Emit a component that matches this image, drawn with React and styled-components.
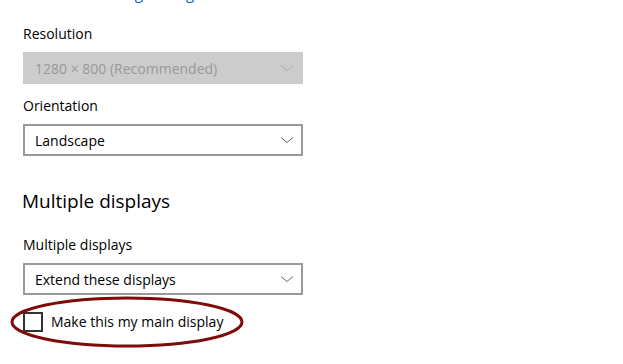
import React from "react";
import styled, { createGlobalStyle } from "styled-components";

const Global = createGlobalStyle`
  html, body { margin: 0; padding: 0; background: #fff; }
  body { font-family: "Open Sans", "Noto Sans", sans-serif; color: #000; }
`;

const Page = styled.div`
  width: 623px;
  height: 364px;
  overflow: hidden;
  padding-left: 23px;
  box-sizing: border-box;
  display: flex;
  flex-direction: column;
  align-items: flex-start;
`;

const LinkStub = styled.a`
  display: block;
  margin-top: -15px;
  height: 16px;
  line-height: 16px;
  font-size: 15px;
  color: #0067c0;
  text-decoration: none;
`;

const Label = styled.div`
  margin-top: ${(p) => p.$mt}px;
  font-size: 14px;
  line-height: 20px;
  color: #000;
`;

const Heading = styled.h2`
  margin: ${(p) => p.$mt}px 0 0 -1px;
  font-size: 19px;
  line-height: 28px;
  font-weight: 400;
  color: #000;
`;

const Select = styled.div`
  margin-top: 8px;
  width: 280px;
  height: 32px;
  box-sizing: border-box;
  display: flex;
  align-items: center;
  justify-content: space-between;
  padding: 0 7px 0 10px;
  font-size: 14px;
  background: ${(p) => (p.$disabled ? "#cccccc" : "#ffffff")};
  border: 2px solid ${(p) => (p.$disabled ? "#cccccc" : "#999999")};
  color: ${(p) => (p.$disabled ? "#999999" : "#000000")};
`;

const Chevron = ({ color }) => (
  <svg width="14" height="8" viewBox="0 0 14 8">
    <polyline points="1,1.5 7,6.5 13,1.5" fill="none" stroke={color} strokeWidth="1" />
  </svg>
);

const CheckRow = styled.label`
  position: relative;
  margin-top: 17px;
  display: flex;
  align-items: center;
  gap: 8px;
  font-size: 14px;
  line-height: 20px;
`;

const Box = styled.span`
  width: 20px;
  height: 20px;
  box-sizing: border-box;
  border: 2px solid #333333;
  background: #fff;
`;

const Annotation = styled.svg`
  position: absolute;
  left: -14px;
  top: -17px;
  pointer-events: none;
`;

export default function App() {
  return (
    <>
      <Global />
      <Page>
        <LinkStub href="#">Advanced scaling settings</LinkStub>
        <Label $mt={23}>Resolution</Label>
        <Select $disabled>
          <span>1280 × 800 (Recommended)</span>
          <Chevron color="#aaaaaa" />
        </Select>
        <Label $mt={12}>Orientation</Label>
        <Select>
          <span>Landscape</span>
          <Chevron color="#666666" />
        </Select>
        <Heading $mt={31}>Multiple displays</Heading>
        <Label $mt={20}>Multiple displays</Label>
        <Select>
          <span>Extend these displays</span>
          <Chevron color="#666666" />
        </Select>
        <CheckRow>
          <Box />
          <span>Make this my main display</span>
          <Annotation width="236" height="54" viewBox="0 0 236 54">
            <ellipse cx="118" cy="27" rx="115" ry="24" fill="none" stroke="#7f0a0a" strokeWidth="3" />
          </Annotation>
        </CheckRow>
      </Page>
    </>
  );
}
